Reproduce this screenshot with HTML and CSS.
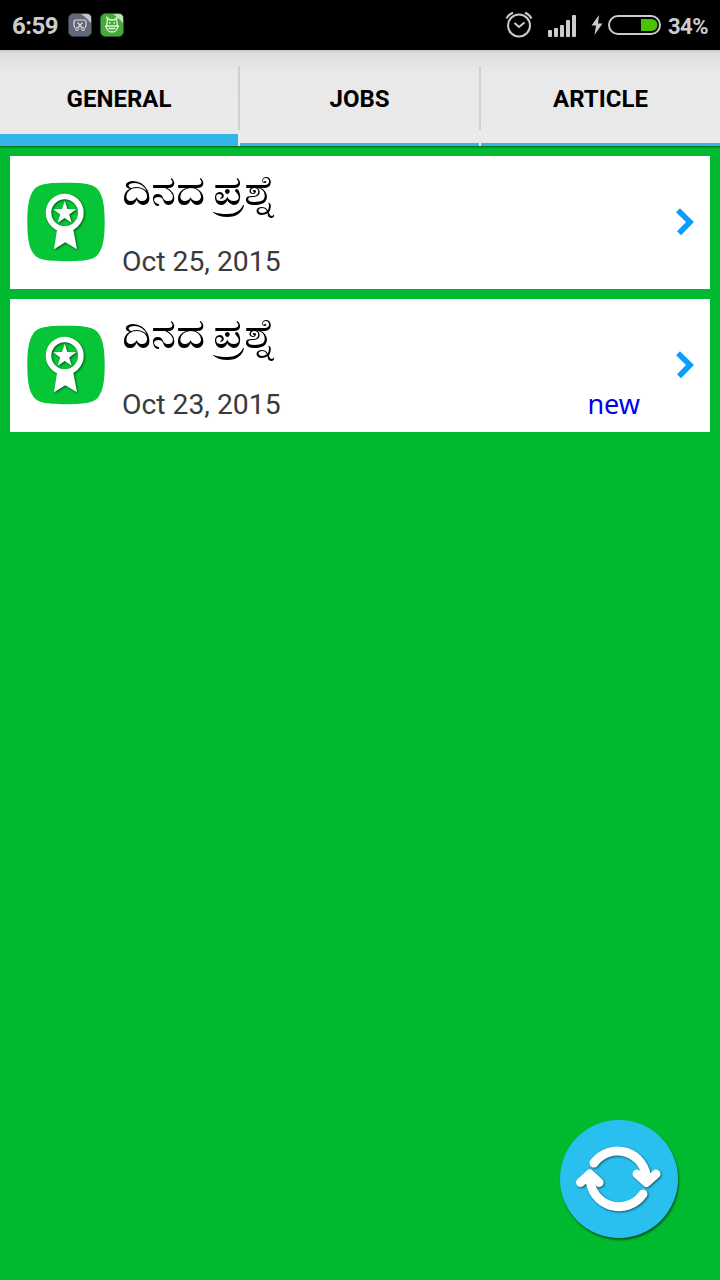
FILE: index.html
```
<!DOCTYPE html>
<html lang="kn">
<head>
    <meta charset="UTF-8">
    <meta name="viewport" content="width=device-width, initial-scale=1.0">
    <title>General</title>
    <link rel="stylesheet" href="styles.css">
</head>
<body>
    <svg class="symbols" width="0" height="0">
        <symbol id="award" viewBox="0 0 80 80">
            <path fill="#06c638" d="M40 .8C61 .8 69 2.500 73 9c4 6 5.700 15 5.700 31S77 65 73 71c-4 6.500-12 8.200-33 8.200S11 77.500 7 71C3 65 1.300 56 1.300 40S3 15 7 9C11 2.500 19 .8 40 .8z"/>
            <g class="raised">
                <circle cx="38.700" cy="30.700" r="16.200" fill="none" stroke="#fff" stroke-width="5.600"/>
                <path fill="#fff" d="M31.300 46q7.500 3.500 15.700 0l4 21.300-11.700-7L28 67.300z"/>
                <path fill="#fff" d="M38.700 19l2.700 8 8.700.2-6.900 5.200 2.500 8.400-7-4.900-7 4.900 2.500-8.400-6.900-5.200 8.700-.2z"/>
            </g>
        </symbol>
        <symbol id="chevron" viewBox="0 0 24 32">
            <path d="M6 4.300l12 11.700-11 11.200" fill="none" stroke="#0c9dfc" stroke-width="5.600"/>
        </symbol>
    </svg>

    <header class="status-bar">
        <span class="time">6:59</span>
        <svg class="notice" width="24" height="24" viewBox="0 0 24 24">
            <rect x=".5" y=".5" width="23" height="23" rx="5" fill="#626878" stroke="#353a55"/>
            <path d="M13 1h6q4 0 4 4v5q-4-5-10-9z" fill="#c5c9cf"/>
            <path d="M7 14.500Q6 14 6 12V9q0-2 2-2h8q2 0 2 2v3q0 2-1 2.500M9.500 9.500l4.500 5M14.500 9.500l-4.500 5" fill="none" stroke="#ddd" stroke-width="1.200"/>
            <circle cx="9" cy="16" r="1.500" fill="none" stroke="#ddd"/>
            <circle cx="15" cy="16" r="1.500" fill="none" stroke="#ddd"/>
        </svg>
        <svg class="notice" width="24" height="24" viewBox="0 0 24 24">
            <rect x=".5" y=".5" width="23" height="23" rx="5" fill="#43ae35" stroke="#285b30"/>
            <path d="M13 1h6q4 0 4 4v5q-4-5-10-9z" fill="#c5dfc2"/>
            <path d="M7 12.500Q6.500 9 7.500 8L7 4.500l3 2.500h4l3-2.500-.5 3.500q1 1 .5 4.500M5 13h14M6 13.500q1 5.500 6 5.500t6-5.500" fill="none" stroke="#e2f3df" stroke-width="1.300"/>
            <path d="M9 10h1.500M13.500 10H15M8.500 15.500h7" stroke="#e2f3df" stroke-width="1.300"/>
        </svg>
        <div class="indicators">
            <svg class="alarm" width="28" height="28" viewBox="0 0 28 28" fill="none" stroke="#ccc" stroke-width="2">
                <circle cx="14" cy="14.500" r="11"/>
                <path d="M9.500 12l4.500 4 5.500-4.500M1.500 7.500Q3.500 3.500 8 1.700M20 1.700q4.500 1.800 6.500 5.800"/>
            </svg>
            <svg class="signal" width="28" height="24" viewBox="0 0 28 24" fill="#ccc">
                <rect y="16" width="4" height="7" rx="1"/>
                <rect x="6" y="14" width="4" height="9" rx="1"/>
                <rect x="12" y="11" width="4" height="12" rx="1"/>
                <rect x="18" y="6" width="4" height="17" rx="1"/>
                <rect x="24" y="1" width="4" height="22" rx="1"/>
            </svg>
            <svg class="bolt" width="12" height="22" viewBox="0 0 12 22">
                <path d="M8 1L.5 11.500H5L3.500 21 11.500 9.500H7z" fill="#ccc"/>
            </svg>
            <svg class="battery" width="54" height="22" viewBox="0 0 54 22">
                <rect x="1" y="2" width="51" height="18" rx="9" fill="none" stroke="#ccc" stroke-width="2"/>
                <path d="M33 5h10.500a6 6 0 0 1 0 12H33z" fill="#48c400"/>
            </svg>
            <span class="percent">34%</span>
        </div>
    </header>

    <nav class="tabs">
        <a class="tab active">GENERAL</a>
        <span class="divider"></span>
        <a class="tab">JOBS</a>
        <span class="divider"></span>
        <a class="tab">ARTICLE</a>
    </nav>

    <main class="list">
        <article class="card">
            <svg class="award"><use href="#award"/></svg>
            <div class="card-text">
                <h2>ದಿನದ ಪ್ರಶ್ನೆ</h2>
                <p class="date">Oct 25, 2015</p>
            </div>
            <svg class="chevron"><use href="#chevron"/></svg>
        </article>
        <article class="card">
            <svg class="award"><use href="#award"/></svg>
            <div class="card-text">
                <h2>ದಿನದ ಪ್ರಶ್ನೆ</h2>
                <p class="date">Oct 23, 2015</p>
            </div>
            <span class="new">new</span>
            <svg class="chevron"><use href="#chevron"/></svg>
        </article>
    </main>

    <button class="refresh" aria-label="Refresh">
        <svg width="118" height="118" viewBox="0 0 118 118">
            <g class="raised" fill="none" stroke="#fff" stroke-width="9" stroke-linecap="round" stroke-linejoin="round">
                <path d="M34 43A29 29 0 0 1 86.500 60"/>
                <path d="M77 54l9.500 8.500 9.500-8.500"/>
                <path d="M83 74A29 29 0 0 1 30 58"/>
                <path d="M20.500 62.500l9.300-8.500 9.300 8.500"/>
            </g>
        </svg>
    </button>
</body>
</html>
```

FILE: styles.css
```
* {
    margin: 0;
    padding: 0;
    box-sizing: border-box;
}
body {
    min-height: 100vh;
    background-color: #00ba2f;
    font-family: Roboto, "Noto Sans", sans-serif;
}
svg {
    display: block;
    flex-shrink: 0;
}
.symbols {
    position: absolute;
}
.raised {
    filter: drop-shadow(1px 1px 1px rgba(0, 0, 0, 0.55));
}

/* status bar */
.status-bar {
    display: flex;
    align-items: center;
    height: 50px;
    padding: 0 12px;
    background-color: #000;
    color: #ccc;
    font-size: 24px;
    font-weight: 700;
}
.time {
    width: 56px;
    padding-top: 2px;
    letter-spacing: -0.5px;
}
.notice {
    margin-right: 8px;
}
.indicators {
    display: flex;
    align-items: center;
    margin-left: auto;
}
.signal {
    margin: 2px 15px 0 15px;
}
.battery {
    margin: 0 6px 0 5px;
}
.percent {
    width: 40px;
    padding-top: 2px;
    font-size: 22px;
    letter-spacing: -0.5px;
}

/* tabs */
.tabs {
    display: flex;
    height: 96px;
    background: linear-gradient(#c8c4c8 0, #dcdcdc 3px, #e2e2e2 9px, #e9e9e9 22px, #eaeaea);
    box-shadow: 0 1px 2px rgba(0, 0, 0, 0.5);
}
.tab {
    width: 239px;
    padding-top: 35px;
    border-bottom: 3px solid #33b5e5;
    color: #000;
    font-size: 24px;
    font-weight: 700;
    line-height: 28px;
    text-align: center;
}
.tab.active {
    width: 238px;
    border-bottom: 12px solid #33b5e5;
}
.divider {
    width: 2px;
    height: 64px;
    margin-top: 16px;
    background-color: #d0d0d0;
}

/* list */
.list {
    display: flex;
    flex-direction: column;
    gap: 10px;
    padding: 10px;
}
.card {
    display: flex;
    align-items: center;
    height: 133px;
    padding: 0 14px 2px 16px;
    background-color: #fff;
}
.award {
    width: 80px;
    height: 80px;
}
.card-text {
    flex: 1;
    align-self: flex-start;
    padding: 14px 0 0 16px;
}
.card h2 {
    width: max-content;
    height: 74px;
    font-size: 42px;
    font-weight: 400;
    line-height: 42px;
    word-spacing: -3px;
    transform: scaleX(1.08);
    transform-origin: 0 0;
}
.date {
    color: #3a3a3a;
    font-size: 28.3px;
    line-height: 36px;
}
.new {
    align-self: flex-end;
    margin: 0 32px 8px 0;
    color: #0000ee;
    font-family: "Noto Sans", sans-serif;
    font-size: 27px;
    line-height: 36px;
}
.chevron {
    width: 24px;
    height: 32px;
    margin-left: auto;
}

/* floating button over the list */
.refresh {
    position: fixed;
    right: 42px;
    bottom: 42px;
    width: 118px;
    height: 118px;
    border: none;
    border-radius: 50%;
    background-color: #29c0f0;
    box-shadow: 1px 2px 2px rgba(0, 0, 0, 0.5);
}
```
